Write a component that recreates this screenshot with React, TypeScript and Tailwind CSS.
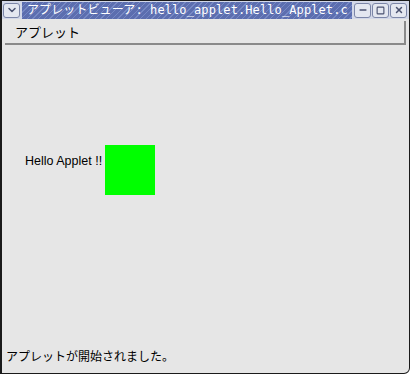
import { ChevronDown, Minus, Square, X } from 'lucide-react';

const jp = "font-['Noto_Sans_CJK_JP','DejaVu_Sans',sans-serif]";

const FrameButton = ({ children }: { children: React.ReactNode }) => (
    <div className="flex h-[15px] w-[17px] shrink-0 items-center justify-center rounded-[3px] border border-[#7c86a8] bg-[#e4e7f0] text-[#4a5270]">
        {children}
    </div>
);

export default function App() {
    return (
        <div className="flex h-[374px] w-[410px] flex-col overflow-hidden rounded-br-[6px] border border-l-2 border-[#1a1a1a] bg-[#e6e6e6]">
            {/* title bar */}
            <div className="flex h-[18px] shrink-0 items-center gap-[2px] bg-[#d3d8e8] pr-[2px] pl-[1px]">
                <FrameButton>
                    <ChevronDown size={12} strokeWidth={3} />
                </FrameButton>
                <div className="flex h-[17px] min-w-0 flex-1 items-center overflow-hidden bg-[repeating-linear-gradient(135deg,#5c6eaf_0px,#5c6eaf_3px,#7688c4_3px,#7688c4_4px)] pl-[5px]">
                    <span className="text-[12px] leading-none tracking-[0.1px] whitespace-nowrap text-white font-['DejaVu_Sans_Mono','Noto_Sans_CJK_JP',monospace]">
                        アプレットビューア: hello_applet.Hello_Applet.c
                    </span>
                </div>
                <div className="flex shrink-0 gap-[1px]">
                    <FrameButton>
                        <Minus size={10} strokeWidth={3.5} />
                    </FrameButton>
                    <FrameButton>
                        <Square size={9} strokeWidth={3} />
                    </FrameButton>
                    <FrameButton>
                        <X size={10} strokeWidth={3.5} />
                    </FrameButton>
                </div>
            </div>

            {/* menu bar */}
            <div className="mx-[3px] mt-[2px] flex h-[24px] items-center border-r-2 border-b-2 border-[#8a8a8a] bg-[#e6e6e6] pl-[10px]">
                <span className={`${jp} text-[13px] text-black`}>アプレット</span>
            </div>

            {/* applet area */}
            <div className="flex flex-1 flex-col">
                <div className="mt-[100px] flex items-start pl-[23px]">
                    <span className="mt-[7px] w-[80px] font-['Liberation_Sans',sans-serif] text-[12.5px] whitespace-nowrap text-black">Hello Applet !!</span>
                    <div className="h-[50px] w-[50px] bg-[#00ff00]" />
                </div>
            </div>

            {/* status */}
            <div className={`${jp} pb-[8px] pl-[4px] text-[12px] text-black`}>アプレットが開始されました。</div>
        </div>
    );
}
